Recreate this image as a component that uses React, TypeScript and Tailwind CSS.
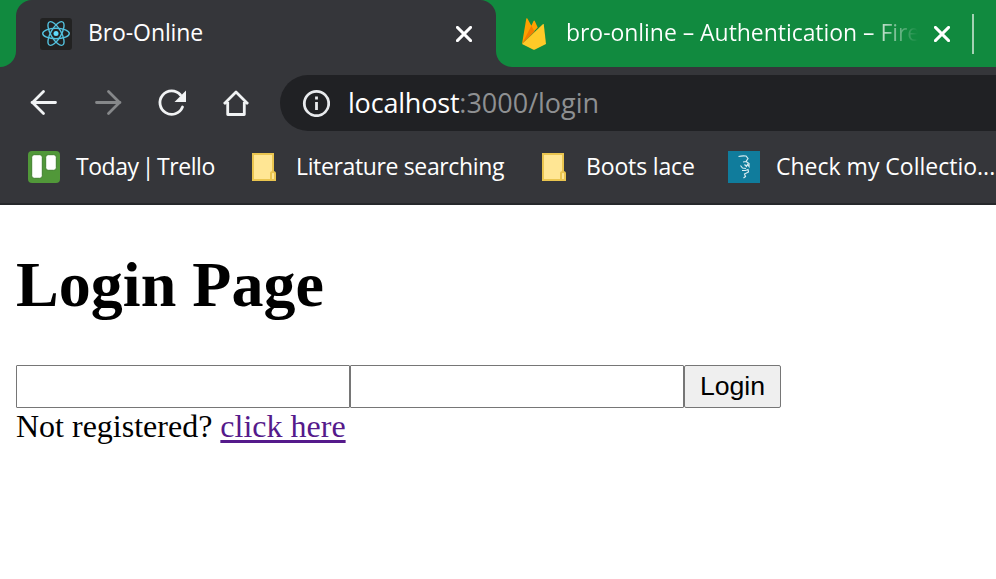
import type { ReactNode } from 'react';

function Close() {
  return (
    <svg className="h-4 w-4 shrink-0" viewBox="0 0 16 16" fill="none" stroke="#fff" strokeWidth="2.9" strokeLinecap="round">
      <path d="M1.4 1.4 14.6 14.6M14.6 1.4 1.4 14.6" />
    </svg>
  );
}

function ReactLogo() {
  return (
    <svg className="h-8 w-8 shrink-0" viewBox="0 0 32 32">
      <rect width="32" height="32" rx="3" fill="#222" />
      <g fill="none" stroke="#53c1de" strokeWidth="1.4">
        <ellipse cx="16" cy="15.5" rx="13.3" ry="5.2" />
        <ellipse cx="16" cy="15.5" rx="13.3" ry="5.2" transform="rotate(60 16 15.5)" />
        <ellipse cx="16" cy="15.5" rx="13.3" ry="5.2" transform="rotate(120 16 15.5)" />
      </g>
      <circle cx="16" cy="15.5" r="2.5" fill="#61dafb" />
    </svg>
  );
}

function FirebaseLogo() {
  return (
    <svg className="h-8 w-6 shrink-0" viewBox="0 0 24 32">
      <path d="M0 26 4.3.5Q4.8-.2 5.4.6L9.4 7.8 11.5 3Q12.2 2 12.8 3L15.7 9.5Z" fill="#ffa000" />
      <path d="M0 26 9.4 7.8 12.6 13.5Z" fill="#f57c00" />
      <path d="M0 26 20.8 6.2Q21.6 5.6 21.8 6.6L24 26 13 31.6Q12 32 11 31.6Z" fill="#ffca28" />
    </svg>
  );
}

function Note() {
  return (
    <svg className="h-7 w-6 shrink-0" viewBox="0 0 24 28">
      <path d="M1 1H21V27H1Z" fill="#ffe694" stroke="#eac54f" strokeWidth="2" />
      <path d="M19 27V20.5Q19 19 20.5 19H21.5Q23 19 23 20.5V27Z" fill="#ffe694" stroke="#eac54f" strokeWidth="2" />
    </svg>
  );
}

function Nav({ children, dim }: { children: ReactNode; dim?: boolean }) {
  return (
    <svg
      className={dim ? 'h-8 w-8 shrink-0 text-[#86888a]' : 'h-8 w-8 shrink-0 text-[#f1f3f4]'}
      viewBox="0 0 32 32"
      fill="none"
      stroke="currentColor"
      strokeWidth="2.8"
    >
      {children}
    </svg>
  );
}

export default function App() {
  return (
    <div className="flex h-[579px] w-[996px] flex-col overflow-hidden bg-white">
      <header className="h-[205px] shrink-0 border-b-2 border-[#26282b] bg-[#35363a] font-['Open_Sans',sans-serif] text-[23px] whitespace-nowrap text-white">
        <div className="flex h-[67px]">
          <div className="w-4 shrink-0 rounded-br-2xl bg-[#118a3f]" />
          <div className="w-[480px] shrink-0 bg-[#118a3f]">
            <div className="flex h-full items-center rounded-t-2xl bg-[#35363a] pr-6 pl-6">
              <ReactLogo />
              <span className="ml-4 flex-1 pb-0.5 tracking-[-0.1px]">Bro-Online</span>
              <Close />
            </div>
          </div>
          <div className="flex flex-1 items-center rounded-bl-2xl bg-[#118a3f] pl-[26px]">
            <FirebaseLogo />
            <span className="ml-5 w-[352px] shrink-0 bg-gradient-to-r from-white from-[86%] to-transparent bg-clip-text pb-0.5 tracking-[-0.05px] text-transparent">
              bro-online – Authentication – Fire
            </span>
            <span className="ml-4 flex"><Close /></span>
            <span className="ml-[22px] h-10 w-0.5 bg-[#a4d2b4]" />
          </div>
        </div>

        <div className="flex h-[72px] items-center pl-7">
          <div className="flex w-[252px] shrink-0 gap-8">
            <Nav><path d="M4 15.5H27.5M15.5 4.5 4.5 15.5 15.5 26.5" strokeLinecap="round" /></Nav>
            <Nav dim><path d="M4.5 15.5H28M16.5 4.5 27.5 15.5 16.5 26.5" strokeLinecap="round" /></Nav>
            <Nav>
              <path d="M26.5 20A11.7 11.7 0 1 1 24.5 8" strokeLinecap="round" />
              <path d="M30 3.5V15H18.5Z" fill="currentColor" stroke="none" />
            </Nav>
            <Nav><path d="M4 17 16 5 28 17M7.7 15V27.5H24.3V15" strokeLinejoin="round" /></Nav>
          </div>
          <div className="flex h-14 flex-1 items-center rounded-l-full bg-[#202124] pl-[22px]">
            <svg className="h-7 w-7 shrink-0" viewBox="0 0 28 28" fill="none" stroke="#e8eaed" strokeWidth="2.8">
              <circle cx="14.5" cy="14.5" r="12.2" />
              <path d="M14.5 13V21M14.5 7.5V10.5" />
            </svg>
            <span className="ml-[18px] text-[27px] text-[#8e9092]">
              <span className="tracking-[-0.2px] text-white">localhost</span><span>:3000/login</span>
            </span>
          </div>
        </div>

        <div className="flex h-14 items-center pl-7">
          <div className="flex w-[224px] shrink-0 items-center">
            <svg className="h-8 w-8 shrink-0" viewBox="0 0 32 32">
              <rect width="32" height="32" rx="4" fill="#519839" />
              <g fill="#fff" stroke="#3f7f2d" strokeWidth="1">
                <rect x="3.7" y="3.7" width="10.6" height="23.6" rx="2.5" />
                <rect x="17.7" y="3.7" width="10.6" height="15.6" rx="2.5" />
              </g>
            </svg>
            <span className="ml-4 pb-0.5 tracking-[-0.45px] [word-spacing:-2.4px]">Today | Trello</span>
          </div>
          <div className="flex w-[290px] shrink-0 items-center">
            <Note />
            <span className="ml-5 pb-0.5 tracking-[-0.36px]">Literature searching</span>
          </div>
          <div className="flex w-[186px] shrink-0 items-center">
            <Note />
            <span className="ml-5 pb-0.5 tracking-[-0.15px]">Boots lace</span>
          </div>
          <svg className="h-8 w-8 shrink-0" viewBox="0 0 32 32">
            <rect width="32" height="32" fill="#107c9c" />
            <path d="M10.5 5.5Q14 4.5 18 5L20 7.5 18 10.5 15 11M18 10.5 21 12.5V15.5L19.5 13.5 18.5 15.5 16.5 13.5M12.5 14.5 14.5 17 18 17.5M14 19.5H17.5L20 18.5 20.5 21 16.5 23 17.5 25.5 15.5 27" fill="none" stroke="#d6ebf0" strokeWidth="1.2" />
          </svg>
          <span className="ml-4 pb-0.5">Check my Collectio...</span>
        </div>
      </header>

      <main className="px-4 font-['Liberation_Serif',serif] text-black">
        <h1 className="mt-[43px] text-[64px] leading-[74px] font-bold tracking-[0.05px]">Login Page</h1>
        <div className="mt-[43px] flex h-[43px] font-['Liberation_Sans',sans-serif]">
          <input className="w-[334px] rounded-[1px] border border-[#767676] bg-white px-1" />
          <input className="w-[334px] rounded-[1px] border border-[#767676] bg-white px-1" />
          <button className="w-[97px] rounded-[2px] border border-[#767676] bg-[#efefef] pb-px text-[26.67px] leading-10">Login</button>
        </div>
        <p className="text-[32px] leading-[36px]">
          Not registered? <a className="text-[#551a8b] underline decoration-[3px] underline-offset-[3px]">click here</a>
        </p>
      </main>
    </div>
  );
}
